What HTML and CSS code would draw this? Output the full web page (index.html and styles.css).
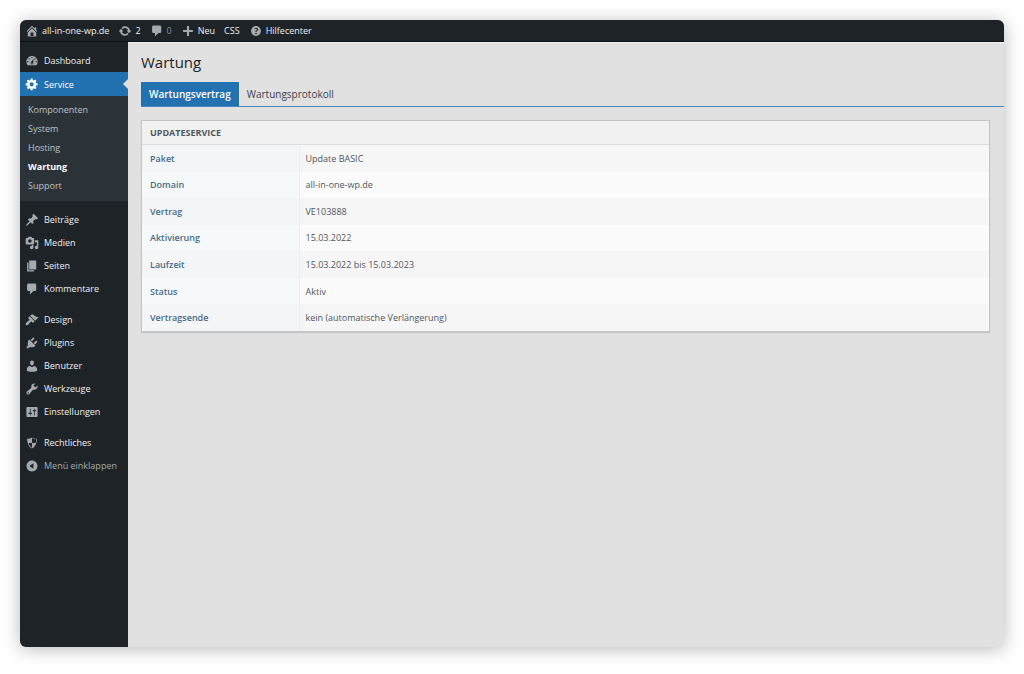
FILE: index.html
```html
<!DOCTYPE html>
<html lang="de">
<head>
<meta charset="utf-8">
<meta name="viewport" content="width=device-width, initial-scale=1">
<title>Wartung</title>
<link rel="stylesheet" href="styles.css">
</head>
<body>
<div class="window">
  <header class="topbar">
    <a class="top-link" href="#"><svg class="icon" viewBox="0 0 20 20"><path d="M16 8.5l1.53 1.53-1.06 1.06L10 4.6l-6.47 6.49-1.06-1.06L10 2.5l4 4v-2h2v4zm-6-2.46l6 5.99V18H4v-5.97zM12 17v-5H8v5h4z"/></svg>all-in-one-wp.de</a>
    <a class="top-link" href="#"><svg class="icon" viewBox="0 0 20 20"><path d="M10.2 3.28c3.53 0 6.43 2.61 6.92 6h2.08l-3.5 4-3.5-4h2.32c-.45-1.97-2.21-3.45-4.32-3.45-1.45 0-2.73.71-3.54 1.78L4.95 5.66C6.23 4.2 8.11 3.28 10.2 3.28zm-.4 13.44c-3.52 0-6.43-2.61-6.92-6H.8l3.5-4c1.17 1.33 2.33 2.67 3.5 4H5.48c.45 1.97 2.21 3.45 4.32 3.45 1.45 0 2.73-.71 3.54-1.78l1.71 1.95c-1.28 1.46-3.15 2.38-5.25 2.38z"/></svg>2</a>
    <a class="top-link top-link-muted" href="#"><svg class="icon" viewBox="0 0 20 20"><path d="M5 2h9c1.1 0 2 .9 2 2v7c0 1.1-.9 2-2 2h-2l-5 5v-5H5c-1.1 0-2-.9-2-2V4c0-1.1.9-2 2-2z"/></svg>0</a>
    <a class="top-link" href="#"><svg class="icon" viewBox="0 0 20 20"><path d="M17 8.500v3h-5.500V17h-3v-5.500H3v-3h5.500V3h3v5.500z"/></svg>Neu</a>
    <a class="top-link" href="#">CSS</a>
    <a class="top-link" href="#"><svg class="icon" viewBox="0 0 20 20"><path d="M17 10c0-3.87-3.14-7-7-7-3.87 0-7 3.13-7 7s3.13 7 7 7c3.86 0 7-3.13 7-7zm-6.3 1.48H9.14v-.43c0-.38.08-.7.24-.98s.46-.57.88-.89c.41-.29.68-.53.81-.71.14-.18.2-.39.2-.62 0-.25-.09-.44-.28-.58-.19-.13-.45-.19-.79-.19-.58 0-1.25.19-2 .57l-.64-1.28c.87-.49 1.8-.74 2.77-.74.81 0 1.45.2 1.92.58.48.39.71.91.71 1.55 0 .43-.09.8-.29 1.11-.19.32-.57.67-1.11 1.06-.38.28-.61.49-.71.63-.1.15-.15.34-.15.57v.35zm-1.47 2.74c-.18-.17-.27-.42-.27-.73 0-.33.08-.58.26-.75s.43-.25.77-.25c.32 0 .57.09.75.26s.27.42.27.74c0 .3-.09.55-.27.72-.18.18-.43.27-.75.27-.33 0-.58-.09-.76-.26z"/></svg>Hilfecenter</a>
  </header>
  <div class="layout">
    <nav class="sidebar">
      <ul class="menu">
        <li><a class="menu-link" href="#"><svg class="icon" viewBox="0 0 20 20"><path d="M3.76 16h12.48c1.1-1.37 1.76-3.11 1.76-5 0-4.42-3.58-8-8-8s-8 3.58-8 8c0 1.89.66 3.63 1.76 5zM10 4c.55 0 1 .45 1 1s-.45 1-1 1-1-.45-1-1 .45-1 1-1zM6 6c.55 0 1 .45 1 1s-.45 1-1 1-1-.45-1-1 .45-1 1-1zm8 0c.55 0 1 .45 1 1s-.45 1-1 1-1-.45-1-1 .45-1 1-1zm-5.37 5.55L12 7v6c0 1.1-.9 2-2 2s-2-.9-2-2c0-.57.24-1.08.63-1.45zM4 10c.55 0 1 .45 1 1s-.45 1-1 1-1-.45-1-1 .45-1 1-1zm12 0c.55 0 1 .45 1 1s-.45 1-1 1-1-.45-1-1 .45-1 1-1zm-5 3c0-.55-.45-1-1-1s-1 .45-1 1 .45 1 1 1 1-.45 1-1z"/></svg>Dashboard</a></li>
        <li>
          <a class="menu-link menu-link-current" href="#"><svg class="icon" viewBox="0 0 20 20"><path d="M18 12h-2.18c-.17.7-.44 1.35-.81 1.93l1.54 1.54-2.1 2.1-1.54-1.54c-.58.36-1.23.63-1.91.79V19H8v-2.18c-.68-.16-1.33-.43-1.91-.79l-1.54 1.54-2.12-2.12 1.54-1.54c-.36-.58-.63-1.23-.79-1.91H1V9.03h2.17c.16-.7.44-1.35.8-1.94L2.43 5.55l2.1-2.1 1.54 1.54c.58-.37 1.24-.64 1.93-.81V2h3v2.18c.68.16 1.33.43 1.91.79l1.54-1.54 2.12 2.12-1.54 1.54c.36.59.64 1.24.8 1.94H18V12zm-8.5 1.5c1.66 0 3-1.34 3-3s-1.34-3-3-3-3 1.34-3 3 1.34 3 3 3z"/></svg>Service</a>
          <ul class="submenu">
            <li><a class="submenu-link" href="#">Komponenten</a></li>
            <li><a class="submenu-link" href="#">System</a></li>
            <li><a class="submenu-link" href="#">Hosting</a></li>
            <li><a class="submenu-link submenu-link-current" href="#" aria-current="page">Wartung</a></li>
            <li><a class="submenu-link" href="#">Support</a></li>
          </ul>
        </li>
      </ul>
      <ul class="menu">
        <li><a class="menu-link" href="#"><svg class="icon" viewBox="0 0 20 20"><path d="M10.44 3.02l1.82-1.82 6.36 6.35-1.83 1.82c-1.05-.68-2.48-.57-3.41.36l-.75.75c-.92.93-1.04 2.35-.35 3.41l-1.83 1.82-2.41-2.41-2.8 2.79c-.42.42-3.38 2.71-3.8 2.29s1.86-3.39 2.28-3.81l2.79-2.79L4.1 9.36l1.83-1.82c1.05.69 2.48.57 3.4-.36l.75-.75c.93-.92 1.05-2.35.36-3.41z"/></svg>Beiträge</a></li>
        <li><a class="menu-link" href="#"><svg class="icon" viewBox="0 0 20 20"><path d="M13 11V4c0-.55-.45-1-1-1h-1.67L9 1H5L3.67 3H2c-.55 0-1 .45-1 1v7c0 .55.45 1 1 1h10c.55 0 1-.45 1-1zM7 4.5c1.38 0 2.5 1.12 2.5 2.5S8.38 9.5 7 9.5 4.5 8.38 4.5 7 5.62 4.5 7 4.5zM14 6h5v10.5c0 1.38-1.12 2.5-2.5 2.5S14 17.88 14 16.5s1.12-2.5 2.5-2.5c.17 0 .34.02.5.05V9h-3V6zm-4 8.05V13h2v3.5c0 1.38-1.12 2.5-2.5 2.5S7 17.88 7 16.5 8.12 14 9.5 14c.17 0 .34.02.5.05z"/></svg>Medien</a></li>
        <li><a class="menu-link" href="#"><svg class="icon" viewBox="0 0 20 20"><path d="M6 15V2h10v13H6zm-1 1h8v2H3V5h2v11z"/></svg>Seiten</a></li>
        <li><a class="menu-link" href="#"><svg class="icon" viewBox="0 0 20 20"><path d="M5 2h9c1.1 0 2 .9 2 2v7c0 1.1-.9 2-2 2h-2l-5 5v-5H5c-1.1 0-2-.9-2-2V4c0-1.1.9-2 2-2z"/></svg>Kommentare</a></li>
      </ul>
      <ul class="menu">
        <li><a class="menu-link" href="#"><svg class="icon" viewBox="0 0 20 20"><path d="M14.48 11.06L7.41 3.99l1.5-1.5c.5-.56 2.3-.47 3.51.32 1.21.8 1.43 1.28 2.91 2.1 1.18.64 2.45 1.26 4.45.85zm-.71.71L6.7 4.7 4.93 6.47c-.39.39-.39 1.02 0 1.41l1.06 1.06c.39.39.39 1.03 0 1.42-.6.6-1.43 1.11-2.21 1.69-.35.26-.7.53-1.01.84C1.43 14.23.4 16.08 1.4 17.07c.99 1 2.84-.03 4.18-1.36.31-.31.58-.66.85-1.02.57-.78 1.08-1.61 1.69-2.21.39-.39 1.02-.39 1.41 0l1.06 1.06c.39.39 1.02.39 1.41 0z"/></svg>Design</a></li>
        <li><a class="menu-link" href="#"><svg class="icon" viewBox="0 0 20 20"><path d="M13.11 4.36L9.87 7.6 8 5.73l3.24-3.24c.35-.34 1.05-.2 1.56.32.52.51.66 1.21.31 1.55zm-8 1.77l.91-1.12 9.01 9.01-1.19.84c-.71.71-2.63 1.16-3.82 1.16H6.14L4.9 17.26c-.59.59-1.54.59-2.12 0-.59-.58-.59-1.53 0-2.12l1.24-1.24v-3.88c0-1.13.4-3.19 1.09-3.89zm7.26 3.97l3.24-3.24c.34-.35 1.04-.21 1.55.31.52.51.66 1.21.31 1.55l-3.24 3.25z"/></svg>Plugins</a></li>
        <li><a class="menu-link" href="#"><svg class="icon" viewBox="0 0 20 20"><path d="M10 9.25c-2.27 0-2.73-3.44-2.73-3.44C7 4.02 7.82 2 9.97 2c2.16 0 2.98 2.02 2.71 3.81 0 0-.41 3.44-2.68 3.44zm0 2.57L12.72 10c2.39 0 4.52 2.33 4.52 4.53v2.49s-3.65 1.13-7.24 1.13c-3.65 0-7.24-1.13-7.24-1.13v-2.49c0-2.25 1.94-4.48 4.47-4.48z"/></svg>Benutzer</a></li>
        <li><a class="menu-link" href="#"><svg class="icon" viewBox="0 0 20 20"><path d="M16.68 9.77c-1.34 1.34-3.3 1.67-4.95.99l-5.41 6.52c-.99.99-2.59.99-3.58 0s-.99-2.59 0-3.57l6.52-5.42c-.68-1.65-.35-3.61.99-4.95 1.28-1.28 3.12-1.62 4.72-1.06l-2.89 2.89 2.82 2.82 2.86-2.87c.53 1.58.18 3.39-1.08 4.65zM3.81 16.21c.4.39 1.04.39 1.43 0 .4-.4.4-1.04 0-1.43-.39-.4-1.03-.4-1.43 0-.39.39-.39 1.03 0 1.43z"/></svg>Werkzeuge</a></li>
        <li><a class="menu-link" href="#"><svg class="icon" viewBox="0 0 20 20"><path d="M18 16V4c0-.55-.45-1-1-1H3c-.55 0-1 .45-1 1v12c0 .55.45 1 1 1h14c.55 0 1-.45 1-1zM8 11h1c.55 0 1 .45 1 1s-.45 1-1 1H8v1.5c0 .28-.22.5-.5.5s-.5-.22-.5-.5V13H6c-.55 0-1-.45-1-1s.45-1 1-1h1V5.5c0-.28.22-.5.5-.5s.5.22.5.5V11zm5-2h-1c-.55 0-1-.45-1-1s.45-1 1-1h1V5.5c0-.28.22-.5.5-.5s.5.22.5.5V7h1c.55 0 1 .45 1 1s-.45 1-1 1h-1v5.5c0 .28-.22.5-.5.5s-.5-.22-.5-.5V9z"/></svg>Einstellungen</a></li>
      </ul>
      <ul class="menu">
        <li><a class="menu-link" href="#"><svg class="icon" viewBox="0 0 20 20"><path d="M10 2s3 2 7 2c0 11-7 14-7 14S3 15 3 4c4 0 7-2 7-2zm0 8h5s1-1 1-5c0 0-5-1-6-2v7H5c1 4 5 7 5 7v-7z"/></svg>Rechtliches</a></li>
        <li><button class="menu-link menu-collapse" type="button"><svg class="icon" viewBox="0 0 20 20"><path d="M10 2.16c4.33 0 7.84 3.51 7.84 7.84s-3.51 7.84-7.84 7.84S2.16 14.33 2.16 10 5.71 2.16 10 2.16zm2 11.72V6.12L6.18 9.97z"/></svg>Menü einklappen</button></li>
      </ul>
    </nav>
    <main class="content">
      <h1 class="title">Wartung</h1>
      <nav class="tabs">
        <a class="tab tab-current" href="#" aria-current="page">Wartungsvertrag</a>
        <a class="tab" href="#">Wartungsprotokoll</a>
      </nav>
      <section class="panel">
        <h2 class="panel-title">UPDATESERVICE</h2>
        <table class="details">
          <tr><th scope="row">Paket</th><td>Update BASIC</td></tr>
          <tr><th scope="row">Domain</th><td>all-in-one-wp.de</td></tr>
          <tr><th scope="row">Vertrag</th><td>VE103888</td></tr>
          <tr><th scope="row">Aktivierung</th><td>15.03.2022</td></tr>
          <tr><th scope="row">Laufzeit</th><td>15.03.2022 bis 15.03.2023</td></tr>
          <tr><th scope="row">Status</th><td>Aktiv</td></tr>
          <tr><th scope="row">Vertragsende</th><td>kein (automatische Verlängerung)</td></tr>
        </table>
      </section>
    </main>
  </div>
</div>
</body>
</html>
```

FILE: styles.css
```css
* {
  box-sizing: border-box;
}

body {
  margin: 0;
  padding: 20px 20px 27px;
  background: #fff;
  color: #3c434a;
  font: 9px/13px "Segoe UI", "Open Sans", "Noto Sans", sans-serif;
}

a {
  color: inherit;
  text-decoration: none;
}

ul {
  margin: 0;
  padding: 0;
  list-style: none;
}

.window {
  display: flex;
  flex-direction: column;
  min-height: calc(100vh - 47px);
  overflow: hidden;
  border-radius: 6px;
  background: #e1e1e1;
  box-shadow: 0 2px 18px rgba(0, 0, 0, 0.28);
}

.icon {
  flex: none;
  width: 14px;
  height: 14px;
  fill: #a7aaad;
}

.topbar {
  display: flex;
  align-items: center;
  gap: 9px;
  height: 22px;
  padding: 0 5px;
  border-bottom: 1px solid #0e1216;
  background: #1d2327;
  color: #f0f0f1;
  font-weight: 500;
}

.top-link {
  display: flex;
  align-items: center;
  gap: 3px;
}

.top-link-muted {
  color: #8c8f94;
}

.layout {
  display: flex;
  flex: 1;
}

.sidebar {
  display: flex;
  flex: none;
  flex-direction: column;
  gap: 7px;
  width: 108px;
  padding-top: 7px;
  background: #1d2327;
  color: #f0f0f1;
}

.menu + .menu + .menu {
  padding-top: 1px;
}

.menu-link {
  position: relative;
  display: flex;
  align-items: center;
  gap: 5px;
  width: 100%;
  height: 23px;
  padding: 0 5px;
  font-weight: 500;
}

.menu-link-current {
  height: 24px;
  background: #2271b1;
  color: #fff;
}

.menu-link-current .icon {
  fill: #fff;
}

.menu-link-current::after {
  position: absolute;
  top: 7px;
  right: 0;
  border: 5px solid transparent;
  border-left: 0;
  border-right-color: #e1e1e1;
  content: "";
}

.menu-collapse {
  border: 0;
  background: none;
  color: #a7aaad;
  font: inherit;
}

.submenu {
  padding: 4px 0 6px;
  background: #2c3338;
}

.submenu-link {
  display: block;
  padding: 3px 8px;
  color: #bec1c4;
}

.submenu-link-current {
  color: #fff;
  font-weight: 700;
}

.content {
  flex: 1;
  min-width: 0;
  padding: 9px 0 20px 13px;
  border-top: 1px solid #f2f2f2;
}

.title {
  margin: 0;
  color: #1d2327;
  font-size: 15px;
  font-weight: 400;
  line-height: 20px;
}

.tabs {
  display: flex;
  margin-top: 10px;
  border-bottom: 1px solid #4a86bb;
}

.tab {
  padding: 4px 8px;
  font-size: 10px;
  font-weight: 500;
  line-height: 16px;
}

.tab-current {
  background: #2271b1;
  color: #fff;
  font-weight: 600;
}

.panel {
  margin: 13px 14px 0 0;
  border: 1px solid #c3c4c7;
  background: #fbfbfb;
  box-shadow: 0 1px 1px rgba(0, 0, 0, 0.12);
}

.panel-title {
  margin: 0;
  padding: 5px 8px 4px;
  border-bottom: 1px solid #dcdcde;
  background: #f1f1f1;
  color: #50575e;
  font-size: 9px;
  font-weight: 700;
  line-height: 14px;
}

.details {
  width: 100%;
  height: 186px;
  border-collapse: collapse;
}

.details th,
.details td {
  padding: 0 8px;
  text-align: left;
}

.details th {
  width: 157px;
  border-right: 1px solid #eceeef;
  background: #f5f9fa;
  color: #4a6a88;
  font-weight: 600;
}

.details td {
  padding-left: 6px;
  color: #50575e;
}

.details tr:nth-child(odd) th {
  background: #f3f5f7;
}

.details tr:nth-child(odd) td {
  background: #f6f6f6;
}
```
